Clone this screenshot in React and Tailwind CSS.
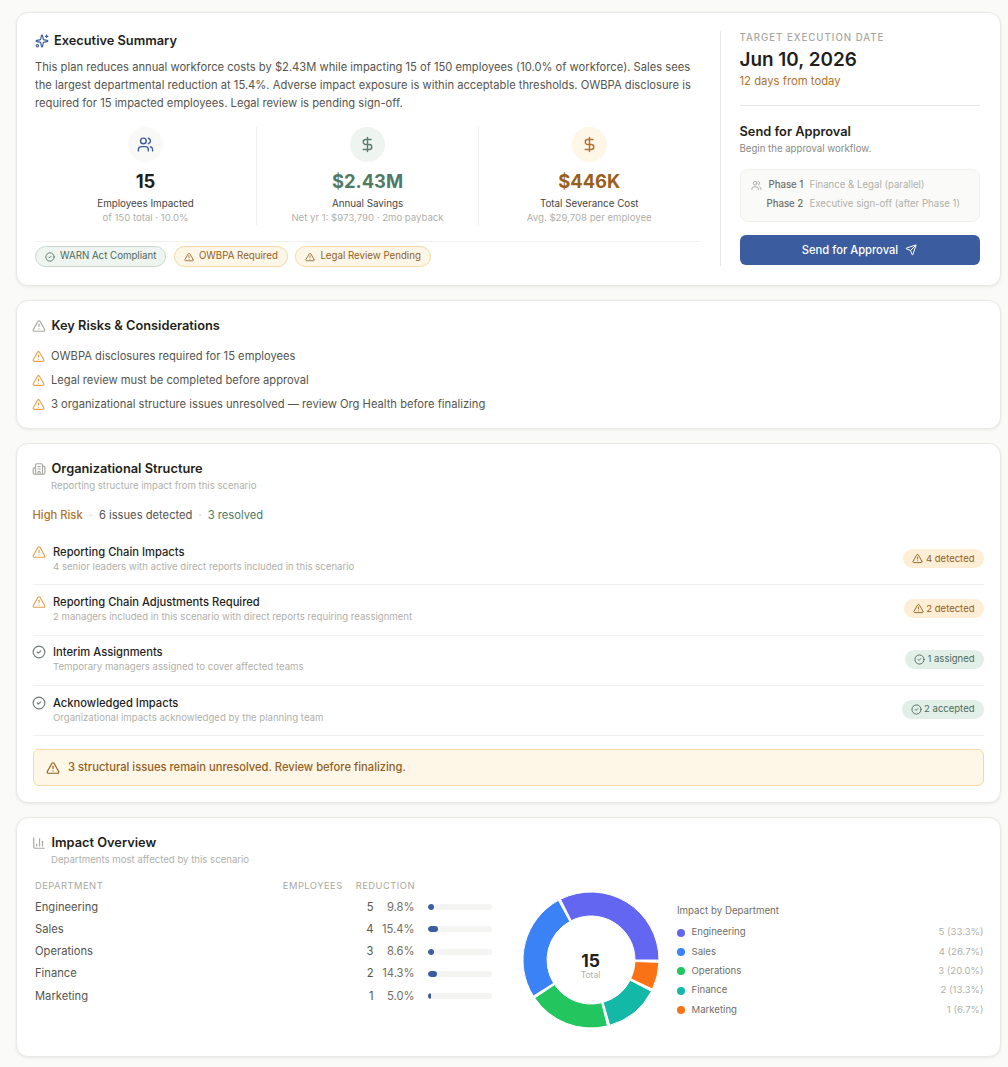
import { AlertTriangle, BarChart3, Building2, CheckCircle2, DollarSign, Send, Sparkles, Users } from 'lucide-react'

const METRICS = [
  { icon: Users, circle: 'bg-[#f9f9f7]', iconColor: 'text-[#3b5c9e]', value: '15', valueColor: 'text-[#1f1f1d]', label: 'Employees Impacted', sub: 'of 150 total · 10.0%' },
  { icon: DollarSign, circle: 'bg-[#eef4f0]', iconColor: 'text-[#5a7d6c]', value: '$2.43M', valueColor: 'text-[#4f7a66]', label: 'Annual Savings', sub: 'Net yr 1: $973,790 · 2mo payback' },
  { icon: DollarSign, circle: 'bg-[#fef6e6]', iconColor: 'text-[#b0732d]', value: '$446K', valueColor: 'text-[#9a5f1c]', label: 'Total Severance Cost', sub: 'Avg. $29,708 per employee' },
]

const RISKS = [
  'OWBPA disclosures required for 15 employees',
  'Legal review must be completed before approval',
  '3 organizational structure issues unresolved — review Org Health before finalizing',
]

const ORG_ROWS = [
  { title: 'Reporting Chain Impacts', desc: '4 senior leaders with active direct reports included in this scenario', badge: '4 detected', warn: true },
  { title: 'Reporting Chain Adjustments Required', desc: '2 managers included in this scenario with direct reports requiring reassignment', badge: '2 detected', warn: true },
  { title: 'Interim Assignments', desc: 'Temporary managers assigned to cover affected teams', badge: '1 assigned', warn: false },
  { title: 'Acknowledged Impacts', desc: 'Organizational impacts acknowledged by the planning team', badge: '2 accepted', warn: false },
]

const DEPARTMENTS = [
  { name: 'Engineering', count: 5, pct: 9.8, share: '5 (33.3%)', color: '#6366f1', dot: 'bg-[#6366f1]' },
  { name: 'Sales', count: 4, pct: 15.4, share: '4 (26.7%)', color: '#3b82f6', dot: 'bg-[#3b82f6]' },
  { name: 'Operations', count: 3, pct: 8.6, share: '3 (20.0%)', color: '#22c55e', dot: 'bg-[#22c55e]' },
  { name: 'Finance', count: 2, pct: 14.3, share: '2 (13.3%)', color: '#14b8a6', dot: 'bg-[#14b8a6]' },
  { name: 'Marketing', count: 1, pct: 5.0, share: '1 (6.7%)', color: '#f97316', dot: 'bg-[#f97316]' },
]

function Card({ className, children }) {
  return (
    <div className={`rounded-xl border border-[#e8e8e5] bg-white shadow-[0_1px_3px_rgba(0,0,0,0.08)] ${className}`}>
      {children}
    </div>
  )
}

function Donut() {
  const cx = 70
  const cy = 70
  const outer = 68
  const inner = 44
  const pad = 2
  const total = DEPARTMENTS.reduce((sum, d) => sum + d.count, 0)
  const sweep = 360 - pad * DEPARTMENTS.length
  let angle = 0
  const pt = (r, a) => [cx + r * Math.cos((a * Math.PI) / 180), cy - r * Math.sin((a * Math.PI) / 180)]

  return (
    <svg width="140" height="140" viewBox="0 0 140 140">
      {DEPARTMENTS.map((d) => {
        const start = angle
        const end = angle + (d.count / total) * sweep
        angle = end + pad
        const [x1, y1] = pt(outer, start)
        const [x2, y2] = pt(outer, end)
        const [x3, y3] = pt(inner, end)
        const [x4, y4] = pt(inner, start)
        return (
          <path
            key={d.name}
            d={`M${x1} ${y1}A${outer} ${outer} 0 0 0 ${x2} ${y2}L${x3} ${y3}A${inner} ${inner} 0 0 1 ${x4} ${y4}Z`}
            fill={d.color}
            stroke="#fff"
            strokeWidth="1"
          />
        )
      })}
    </svg>
  )
}

export default function App() {
  return (
    <div className="min-h-[1067px] bg-[#fafaf8] pl-[15.5px] pr-[7.5px] pt-3 font-['Inter',sans-serif] text-[#1f1f1d]">
      <div className="flex flex-col gap-[14px]">
        {/* Executive Summary */}
        <Card className="flex h-[274px] pl-[18.5px] pr-5 pt-[18px] pb-[19px]">
          <div className="flex-1 min-w-0 pr-5 pt-[2px]">
            <div className="flex items-center gap-[5px] h-4">
              <Sparkles className="h-[14px] w-[14px] text-[#3b5c9e]" />
              <span className="text-[12.8px] font-semibold">Executive Summary</span>
            </div>
            <p className="mt-[9px] text-[11.2px] leading-[18px] text-[#55554f]">
              This plan reduces annual workforce costs by $2.43M while impacting 15 of 150 employees (10.0% of workforce). Sales sees the largest departmental reduction at 15.4%. Adverse impact exposure is within acceptable thresholds. OWBPA disclosure is required for 15 impacted employees. Legal review is pending sign-off.
            </p>
            <div className="mt-[15px] grid grid-cols-[222px_222px_1fr]">
              {METRICS.map((m, i) => {
                const Icon = m.icon
                return (
                  <div key={m.label} className={`flex h-[98px] flex-col items-center ${i < 2 ? 'border-r border-[#f0f0ed]' : ''}`}>
                    <div className={`flex h-[35px] w-[35px] items-center justify-center rounded-full ${m.circle}`}>
                      <Icon className={`h-[17px] w-[17px] ${m.iconColor}`} />
                    </div>
                    <div className={`mt-[7px] text-[18.4px] font-bold leading-6 ${m.valueColor}`}>{m.value}</div>
                    <div className="mt-[5px] text-[9.8px] leading-3 text-[#46463f]">{m.label}</div>
                    <div className="mt-[2px] text-[9.6px] leading-3 text-[#b0b0aa]">{m.sub}</div>
                  </div>
                )
              })}
            </div>
            <div className="mt-4 flex gap-[7.5px] border-t border-[#f0f0ed] pt-1 text-[9.7px]">
              <span className="flex h-[21px] items-center gap-[5px] rounded-full border border-[#c9d9d0] bg-[#eef4f0] px-[9px] text-[#4d6a5c]">
                <CheckCircle2 className="h-[10px] w-[10px]" />
                WARN Act Compliant
              </span>
              <span className="flex h-[21px] items-center gap-[5px] rounded-full border border-[#f3d9a4] bg-[#fef6e6] px-[9px] text-[#93601f]">
                <AlertTriangle className="h-[10px] w-[10px]" />
                OWBPA Required
              </span>
              <span className="flex h-[21px] items-center gap-[5px] rounded-full border border-[#f3d9a4] bg-[#fef6e6] px-[9px] text-[#93601f]">
                <AlertTriangle className="h-[10px] w-[10px]" />
                Legal Review Pending
              </span>
            </div>
          </div>
          <div className="w-[260px] shrink-0 border-l border-[#e8e8e5] pl-[19px] pt-[1px]">
            <div className="text-[9.7px] font-medium uppercase leading-3 tracking-[0.1em] text-[#a8a8a2]">Target Execution Date</div>
            <div className="mt-[2px] text-[18.9px] font-semibold leading-7">Jun 10, 2026</div>
            <div className="-mt-[1px] text-[11.3px] leading-4 text-[#b0732d]">12 days from today</div>
            <div className="mt-4 border-t border-[#e8e8e5] pt-[18px]">
              <div className="text-[12.8px] font-semibold leading-4">Send for Approval</div>
              <div className="mt-[3px] text-[9.65px] leading-3 text-[#8a8a84]">Begin the approval workflow.</div>
            </div>
            <div className="mt-[14px] flex h-[53px] flex-col gap-[7px] rounded-lg border border-[#f0f0ed] bg-[#fafaf8] pl-[10px] pt-[9px] text-[9.63px] leading-3">
              <div className="flex items-center">
                <Users className="h-[11px] w-[11px] text-[#a8a8a2]" />
                <span className="ml-[7px] w-[41px] font-medium text-[#6e6e68]">Phase 1</span>
                <span className="text-[#b0b0aa]">Finance &amp; Legal (parallel)</span>
              </div>
              <div className="flex items-center pl-[16px]">
                <span className="w-[43px] font-medium text-[#6e6e68]">Phase 2</span>
                <span className="text-[#b0b0aa]">Executive sign-off (after Phase 1)</span>
              </div>
            </div>
            <button className="mt-[13px] flex h-[30px] w-full items-center justify-center gap-[7px] rounded-md bg-[#3b5c9e] text-[11.2px] font-medium text-white">
              Send for Approval
              <Send className="h-3 w-3" />
            </button>
          </div>
        </Card>

        {/* Key Risks */}
        <Card className="h-[129px] px-4 pt-[17px]">
          <div className="-ml-[1px] flex items-center gap-[6px] h-4">
            <AlertTriangle className="h-[14px] w-[14px] text-[#a8a8a2]" />
            <span className="text-[12.8px] font-semibold">Key Risks &amp; Considerations</span>
          </div>
          <div className="mt-[14px] flex flex-col gap-[8px]">
            {RISKS.map((r) => (
              <div key={r} className="-ml-[1px] flex h-4 items-center gap-[6.5px] text-[11.2px] text-[#55554f]">
                <AlertTriangle className="h-[13px] w-[13px] text-[#e8a04c]" />
                {r}
              </div>
            ))}
          </div>
        </Card>

        {/* Organizational Structure */}
        <Card className="h-[360px] px-4 pt-[17px]">
          <div className="-ml-[1px] flex items-center gap-[6px] h-4">
            <Building2 className="h-[14px] w-[14px] text-[#a8a8a2]" />
            <span className="text-[12.8px] font-semibold">Organizational Structure</span>
          </div>
          <div className="mt-[3px] pl-[18.5px] text-[9.6px] leading-3 text-[#b0b0aa]">Reporting structure impact from this scenario</div>
          <div className="mt-[15px] flex h-4 items-center text-[11.2px]">
            <span className="font-medium text-[#b0732d]">High Risk</span>
            <span className="mx-[6.5px] text-[#d0d0ca]">·</span>
            <span className="text-[#55554f]">6 issues detected</span>
            <span className="mx-[6px] text-[#d0d0ca]">·</span>
            <span className="text-[#4f7a66]">3 resolved</span>
          </div>
          <div className="mt-[12px]">
            {ORG_ROWS.map((row) => (
              <div key={row.title} className="flex h-[50.3px] items-center justify-between border-b border-[#f0f0ed] pb-[2px]">
                <div className="-ml-[1px] flex items-start gap-[7.5px]">
                  {row.warn ? (
                    <AlertTriangle className="h-[14px] w-[14px] text-[#e8a04c]" />
                  ) : (
                    <CheckCircle2 className="h-[14px] w-[14px] text-[#6e7d76]" />
                  )}
                  <div>
                    <div className="text-[11.2px] font-medium leading-[14px]">{row.title}</div>
                    <div className="mt-[2px] text-[9.6px] leading-3 text-[#b0b0aa]">{row.desc}</div>
                  </div>
                </div>
                <span className={`flex h-[19px] items-center gap-[2.5px] rounded-full px-[9px] text-[9.5px] ${row.warn ? 'bg-[#fdeed5] text-[#93601f]' : 'bg-[#e2efe8] text-[#4d6a5c]'}`}>
                  {row.warn ? <AlertTriangle className="h-[11px] w-[11px]" /> : <CheckCircle2 className="h-[11px] w-[11px]" />}
                  {row.badge}
                </span>
              </div>
            ))}
          </div>
          <div className="mt-[13px] flex h-[37px] items-center gap-[8.5px] rounded-md border border-[#f3d9a4] bg-[#fef6e6] pl-[12px] text-[11.2px] font-medium text-[#93601f]">
            <AlertTriangle className="h-[14px] w-[14px]" />
            3 structural issues remain unresolved. Review before finalizing.
          </div>
        </Card>

        {/* Impact Overview */}
        <Card className="h-[240px] px-4 pt-[17px]">
          <div className="-ml-[1px] flex items-center gap-[6px] h-4">
            <BarChart3 className="h-[14px] w-[14px] text-[#a8a8a2]" />
            <span className="text-[12.8px] font-semibold">Impact Overview</span>
          </div>
          <div className="mt-[3px] pl-[18.5px] text-[9.6px] leading-3 text-[#b0b0aa]">Departments most affected by this scenario</div>
          <div className="mt-[12px] flex">
            <div className="w-[459.5px] shrink-0 pl-[2.5px]">
              <div className="flex h-4 items-center text-[9.4px] uppercase tracking-[0.05em] text-[#a8a8a2]">
                <span className="flex-1">Department</span>
                <span>Employees</span>
                <span className="ml-[13px] mr-[77px]">Reduction</span>
              </div>
              <div className="mt-[2px]">
                {DEPARTMENTS.map((d) => (
                  <div key={d.name} className="flex h-[22.25px] items-center text-[11.2px] text-[#55554f]">
                    <span className="flex-1">{d.name}</span>
                    <span>{d.count}</span>
                    <span className="w-[41px] text-right text-[#6e6e68]">{d.pct.toFixed(1)}%</span>
                    <div className="ml-[13.5px] h-[6px] w-[64px] overflow-hidden rounded-full bg-[#f4f4f2]">
                      <div className="h-full rounded-full bg-[#3b5c9e]" style={{ width: `${d.pct}%` }} />
                    </div>
                  </div>
                ))}
              </div>
            </div>
            <div className="relative ml-[28.5px] mt-[12px] shrink-0 self-start">
              <Donut />
              <div className="absolute inset-0 flex flex-col items-center justify-center pt-[11px]">
                <span className="text-[17.5px] font-bold leading-5">15</span>
                <span className="-mt-[2px] text-[8.5px] leading-3 text-[#b0b0aa]">Total</span>
              </div>
            </div>
            <div className="ml-[16.5px] flex-1 pt-[27px]">
              <div className="text-[9.7px] leading-3 text-[#6e6e68]">Impact by Department</div>
              <div className="mt-[6px]">
                {DEPARTMENTS.map((d) => (
                  <div key={d.name} className="flex h-[19.3px] items-center text-[9.6px]">
                    <span className={`h-2 w-2 rounded-full ${d.dot}`} />
                    <span className="ml-[6.5px] flex-1 text-[#6e6e68]">{d.name}</span>
                    <span className="text-[#b0b0aa]">{d.share}</span>
                  </div>
                ))}
              </div>
            </div>
          </div>
        </Card>
      </div>
    </div>
  )
}
